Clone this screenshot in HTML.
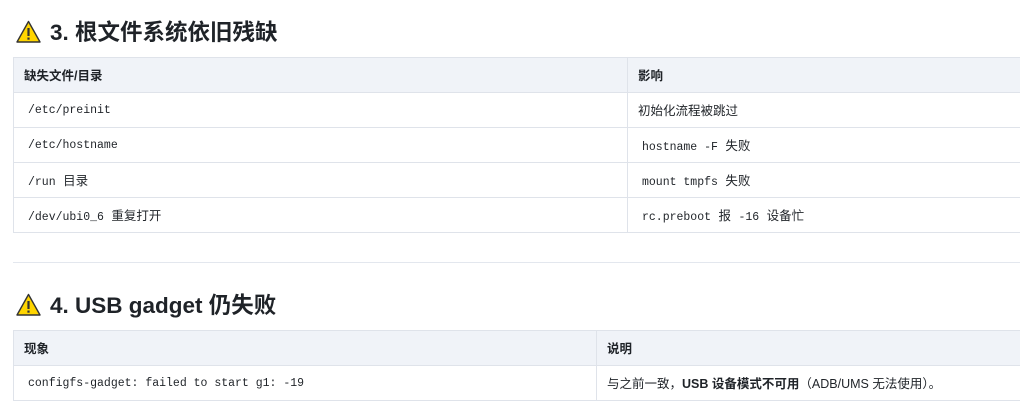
<!DOCTYPE html><html><head><meta charset="utf-8"><style>
body{margin:0;background:#fff;width:1020px;height:409px;overflow:hidden;font-family:"Liberation Sans","Noto Sans CJK SC",sans-serif;color:#1f2328;position:relative}
.h{position:absolute;left:16px;font-size:22.5px;font-weight:bold;display:flex;align-items:center;gap:9px;height:30px}
.h svg{width:25px;height:23px}
table{position:absolute;left:13px;border-collapse:collapse;font-size:12.5px;table-layout:fixed}
td,th{border:1px solid #dfe3ea;height:32px;padding:0 0 2px 10px;text-align:left;vertical-align:middle}
th{background:#f0f3f8;font-weight:bold;font-size:12.5px}
code{font-family:"Liberation Mono",monospace;font-size:11.5px;padding:0 4px}
.hr{position:absolute;left:13px;right:0;top:262px;height:1px;background:#e3e7ee}
</style></head><body>
<div class="h" style="top:16px"><svg viewBox="0 0 25 23"><path d="M12.5 1.5 L24 22 L1 22 Z" fill="#ffd500" stroke="#333" stroke-width="1.4" stroke-linejoin="round"/><rect x="11.4" y="8" width="2.2" height="8" fill="#333"/><rect x="11.4" y="17.5" width="2.2" height="2.2" fill="#333"/></svg>3. 根文件系统依旧残缺</div>
<table style="top:57px;width:1020px"><colgroup><col style="width:614px"><col></colgroup>
<tr><th>缺失文件/目录</th><th>影响</th></tr>
<tr><td><code>/etc/preinit</code></td><td>初始化流程被跳过</td></tr>
<tr><td><code>/etc/hostname</code></td><td><code>hostname -F</code> 失败</td></tr>
<tr><td><code>/run</code> 目录</td><td><code>mount tmpfs</code> 失败</td></tr>
<tr><td><code>/dev/ubi0_6</code> 重复打开</td><td><code>rc.preboot</code> 报 <code>-16</code> 设备忙</td></tr>
</table>
<div class="hr"></div>
<div class="h" style="top:289px"><svg viewBox="0 0 25 23"><path d="M12.5 1.5 L24 22 L1 22 Z" fill="#ffd500" stroke="#333" stroke-width="1.4" stroke-linejoin="round"/><rect x="11.4" y="8" width="2.2" height="8" fill="#333"/><rect x="11.4" y="17.5" width="2.2" height="2.2" fill="#333"/></svg>4. USB gadget 仍失败</div>
<table style="top:330px;width:1020px"><colgroup><col style="width:583px"><col></colgroup>
<tr><th>现象</th><th>说明</th></tr>
<tr><td><code>configfs-gadget: failed to start g1: -19</code></td><td>与之前一致，<b>USB 设备模式不可用</b>（ADB/UMS 无法使用）。</td></tr>
</table>
</body></html>
